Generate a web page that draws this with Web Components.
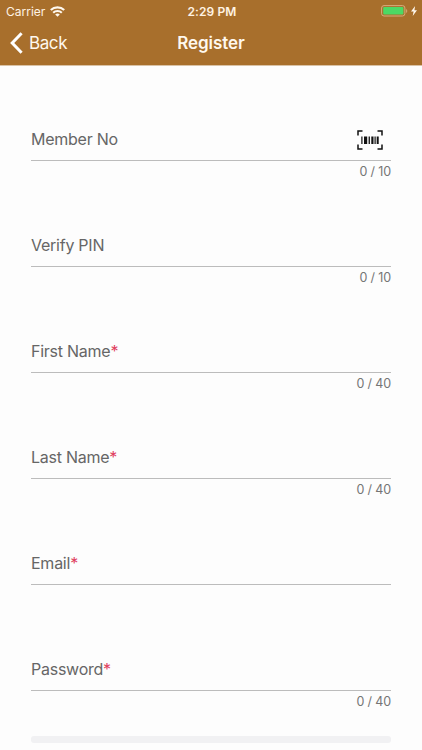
<!DOCTYPE html>
<html lang="en">
<head>
<meta charset="utf-8">
<title>Register</title>
<style>
    html, body {
        margin: 0;
        height: 100%;
        overflow: hidden;
        background: #fdfdfd;
        font-family: Inter, "Liberation Sans", sans-serif;
    }
</style>
</head>
<body>
<register-screen></register-screen>

<script>
// Carrier, clock and battery row at the top of the phone
class StatusBar extends HTMLElement {
    constructor() {
        super();

        const shadow = this.attachShadow({mode: 'open'});

        shadow.innerHTML = `
            <style>
                :host {
                    display: grid;
                    grid-template-columns: 1fr auto 1fr;
                    align-items: center;
                    height: 22px;
                    padding: 0 5px 0 6px;
                    font-size: 12px;
                    color: #fff3e3;
                }
                .carrier, .power {
                    display: flex;
                    align-items: center;
                }
                .carrier {
                    gap: 5px;
                }
                .time {
                    font-weight: 600;
                    letter-spacing: 0.1px;
                    padding-left: 1px;
                }
                .power {
                    justify-content: flex-end;
                    gap: 3px;
                }
                svg { display: block; }
            </style>
            <div class="carrier">
                <span>${this.getAttribute("carrier")}</span>
                <svg width="15" height="11" viewBox="0 0 15 11" fill="none" stroke="#fff8ee" stroke-width="2.1">
                    <path d="M0.8 4.1a9.5 9.5 0 0 1 13.4 0"/>
                    <path d="M3.2 6.7a6.1 6.1 0 0 1 8.6 0"/>
                    <path d="M7.5 10.8L5.2 8.5a3.3 3.3 0 0 1 4.6 0z" fill="#fff8ee" stroke="none"/>
                </svg>
            </div>
            <span class="time">${this.getAttribute("time")}</span>
            <div class="power">
                <svg width="27" height="12" viewBox="0 0 27 12">
                    <rect x="0.6" y="0.6" width="23.3" height="10.4" rx="2.4" fill="none" stroke="#d6ad7c" stroke-width="1"/>
                    <rect x="2.2" y="2.1" width="20.2" height="7.4" rx="1" fill="#4cd964"/>
                    <path d="M25.2 4v4c1.4-.6 1.4-3.4 0-4z" fill="#d6ad7c"/>
                </svg>
                <svg width="6" height="10" viewBox="0 0 6 10">
                    <path d="M4.1 0L0 5.6h2.6L1.7 10 6 4.2H3.4z" fill="#fff8ee"/>
                </svg>
            </div>
        `;
    }
}

class NavBar extends HTMLElement {
    constructor() {
        super();

        const shadow = this.attachShadow({mode: 'open'});

        shadow.innerHTML = `
            <style>
                :host {
                    display: grid;
                    grid-template-columns: 1fr auto 1fr;
                    align-items: center;
                    height: 42px;
                    padding: 0 10px;
                    color: #fff8ee;
                    font-size: 17px;
                }
                .back {
                    display: flex;
                    align-items: center;
                    gap: 6px;
                    padding: 0;
                    border: 0;
                    background: none;
                    font: inherit;
                    letter-spacing: -0.4px;
                    color: inherit;
                }
                .title {
                    font-weight: 600;
                    letter-spacing: -0.05px;
                }
            </style>
            <button class="back">
                <svg width="13" height="22" viewBox="0 0 13 22" fill="none" stroke="#fff" stroke-width="3">
                    <path d="M11.6 1.3L2.2 11l9.4 9.7"/>
                </svg>
                <span><slot name="back"></slot></span>
            </button>
            <span class="title"><slot></slot></span>
        `;
    }
}

// Underlined field with its label, a character counter and room for an icon
class FormField extends HTMLElement {
    constructor() {
        super();

        const shadow = this.attachShadow({mode: 'open'});

        let max = this.getAttribute("max");
        let required = this.hasAttribute("required");

        shadow.innerHTML = `
            <style>
                :host {
                    display: block;
                    height: 106px;
                    box-sizing: border-box;
                    padding-top: 54px;
                }
                .row {
                    display: flex;
                    align-items: center;
                    justify-content: space-between;
                    height: 40px;
                    padding-right: 8px;
                    border-bottom: 1px solid #bcbcbc;
                    font-size: 16px;
                    letter-spacing: -0.25px;
                    color: #666;
                }
                .label { padding-bottom: 2px; }
                .required { color: #e0405e; }
                .counter {
                    padding-top: 3px;
                    line-height: 16px;
                    font-size: 12.5px;
                    letter-spacing: -0.15px;
                    text-align: right;
                    color: #757575;
                }
            </style>
            <div class="row">
                <span class="label"><slot></slot>${required ? '<span class="required">*</span>' : ''}</span>
                <slot name="icon"></slot>
            </div>
            ${max ? `<div class="counter">0 / ${max}</div>` : ''}
        `;
    }
}

class BarcodeIcon extends HTMLElement {
    constructor() {
        super();

        const shadow = this.attachShadow({mode: 'open'});

        shadow.innerHTML = `
            <style>
                :host { display: block; }
                svg { display: block; }
            </style>
            <svg width="26" height="20" viewBox="0 0 26 20">
                <path d="M1 5.5V1H5.5M20.5 1H25V5.500M25 14.500V19H20.500M5.500 19H1V14.500" fill="none" stroke="#111" stroke-width="1.5"/>
                <path d="M4.300 6.500h1.200v7.500h-1.200zM7 6.500h3.200v7.500h-3.200zM11.600 6.500h1.300v7.500h-1.300zM14.300 6.500h2.200v7.500h-2.200zM17.500 6.500h1.200v7.500h-1.200zM19.700 6.500h2v7.500h-2z" fill="#111"/>
            </svg>
        `;
    }
}

class RegisterScreen extends HTMLElement {
    constructor() {
        super();

        const shadow = this.attachShadow({mode: 'open'});

        shadow.innerHTML = `
            <style>
                :host { display: block; }
                header {
                    height: 65px;
                    background: #a86f2c;
                    border-bottom: 1px solid #d9c2a6;
                }
                main {
                    display: flex;
                    flex-direction: column;
                    padding: 0 31px;
                }
                .next {
                    height: 7px;
                    margin-top: 34px;
                    border-radius: 3px;
                    background: #f1f1f3;
                }
            </style>
            <header>
                <status-bar carrier="Carrier" time="2:29 PM"></status-bar>
                <nav-bar><span slot="back">Back</span>Register</nav-bar>
            </header>
            <main>
                <form-field max="10">Member No<barcode-icon slot="icon"></barcode-icon></form-field>
                <form-field max="10">Verify PIN</form-field>
                <form-field max="40" required>First Name</form-field>
                <form-field max="40" required>Last Name</form-field>
                <form-field required>Email</form-field>
                <form-field max="40" required>Password</form-field>
                <div class="next"></div>
            </main>
        `;
    }
}

customElements.define('status-bar', StatusBar);
customElements.define('nav-bar', NavBar);
customElements.define('barcode-icon', BarcodeIcon);
customElements.define('form-field', FormField);
customElements.define('register-screen', RegisterScreen);
</script>
</body>
</html>
